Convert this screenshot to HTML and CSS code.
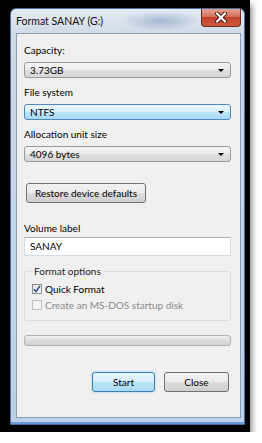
FILE: index.html
```html
<!DOCTYPE html>
<html lang="en">
<head>
  <meta charset="UTF-8">
  <title>Format SANAY (G:)</title>
  <link rel="stylesheet" href="styles.css">
</head>
<body>
  <div class="shot">
    <div class="window">
      <div class="titlebar">
        <span class="title">Format SANAY (G:)</span>
        <div class="close-btn">
          <svg width="14" height="11" viewBox="0 0 14 11">
            <path d="M3 1.5 L11 9.5 M11 1.5 L3 9.5" stroke="#4a1a14" stroke-width="4" stroke-linecap="round"/>
            <path d="M3 1.5 L11 9.5 M11 1.5 L3 9.5" stroke="#ffffff" stroke-width="2.2" stroke-linecap="round"/>
          </svg>
        </div>
      </div>

      <div class="content">
        <span class="lbl">Capacity:</span>
        <div class="combo"><span>3.73GB</span><i class="arrow"></i></div>

        <span class="lbl">File system</span>
        <div class="combo focused"><span>NTFS</span><i class="arrow"></i></div>

        <span class="lbl">Allocation unit size</span>
        <div class="combo"><span>4096 bytes</span><i class="arrow"></i></div>

        <div class="btn restore">Restore device defaults</div>

        <span class="lbl vol">Volume label</span>
        <div class="textbox">SANAY</div>

        <fieldset class="group">
          <legend>Format options</legend>
          <div class="check-row">
            <span class="checkbox checked">
              <svg width="8" height="8" viewBox="0 0 8 8"><path d="M1 4.2 L3 6.6 L7 0.8" fill="none" stroke="#1f3f88" stroke-width="1.4"/></svg>
            </span>
            <span>Quick Format</span>
          </div>
          <div class="check-row disabled">
            <span class="checkbox"></span>
            <span>Create an MS-DOS startup disk</span>
          </div>
        </fieldset>

        <div class="progress"></div>

        <div class="actions">
          <div class="btn default">Start</div>
          <div class="btn">Close</div>
        </div>
      </div>
    </div>
  </div>
</body>
</html>
```

FILE: styles.css
```css
body {
  margin: 0;
  background: #ffffff;
  font-family: Lato, "Open Sans", sans-serif;
  font-size: 10px;
  color: #000000;
}
.shot {
  width: 235px;
  height: 417px;
  padding: 8px 5px 7px 10px;
  background: #000000;
  box-shadow: 2px 4px 6px rgba(0, 0, 0, 0.45);
}
.window {
  box-sizing: border-box;
  height: 417px;
  display: flex;
  flex-direction: column;
  padding: 0 3px 6px 5px;
  border: 1px solid #4b6e9c;
  border-radius: 6px 6px 0 0;
  background:
    radial-gradient(ellipse 40px 10px at 150px 12px, rgba(120, 150, 190, 0.55), rgba(120, 150, 190, 0)),
    linear-gradient(to bottom, #e4eaf1 0, #ccd9e7 30px, #bcd0e8 100%);
  box-shadow: inset 0 -2px 0 #6a9ad8;
}
.titlebar {
  height: 24px;
  display: flex;
  justify-content: space-between;
  align-items: flex-start;
}
.title {
  margin: 6px 0 0 0;
  font-size: 10.5px;
  line-height: 13px;
  color: #111;
}
.close-btn {
  width: 40px;
  height: 18px;
  box-sizing: border-box;
  display: flex;
  align-items: center;
  justify-content: center;
  border: 1px solid #6b2c24;
  border-top: none;
  border-radius: 0 0 4px 4px;
  background: linear-gradient(to bottom, #e6a493 0, #d3735c 45%, #c2412b 50%, #cf5a3c 100%);
}
.content {
  flex: 1;
  padding: 10px 9px 0 7px;
  border: 1px solid #8a9db3;
  background: #f0f0f0;
}
.lbl {
  display: block;
  height: 13px;
  line-height: 13px;
}
.combo {
  box-sizing: border-box;
  height: 16px;
  margin: 5px 0 8px;
  padding: 0 6px 0 5px;
  display: flex;
  align-items: center;
  justify-content: space-between;
  border: 1px solid #9a9a9a;
  border-radius: 3px;
  background: linear-gradient(to bottom, #f4f4f4 0, #ececec 50%, #dfdfdf 51%, #d6d6d6 100%);
}
.combo.focused {
  border-color: #4d8bbf;
  background: linear-gradient(to bottom, #eaf6fd 0, #d9f0fc 50%, #bee6fd 51%, #a7d9f5 100%);
}
.arrow {
  width: 0;
  height: 0;
  border-left: 3px solid transparent;
  border-right: 3px solid transparent;
  border-top: 3px solid #000;
}
.btn {
  box-sizing: border-box;
  height: 20px;
  display: flex;
  align-items: center;
  justify-content: center;
  border: 1px solid #707070;
  border-radius: 3px;
  background: linear-gradient(to bottom, #f2f2f2 0, #ebebeb 50%, #dddddd 51%, #cfcfcf 100%);
}
.restore {
  width: 120px;
  margin: 21px 0 0 2px;
}
.lbl.vol {
  margin-top: 19px;
}
.textbox {
  box-sizing: border-box;
  height: 19px;
  margin-top: 2px;
  padding: 0 5px;
  line-height: 17px;
  border: 1px solid #d5dbe3;
  border-top-color: #abadb3;
  background: #ffffff;
}
.group {
  margin: 9px 0 0;
  padding: 0 7px 7px 7px;
  border: 1px solid #d5dfe5;
  border-radius: 3px;
}
.group legend {
  padding: 0 2px;
  line-height: 13px;
  color: #222;
}
.check-row {
  height: 16px;
  display: flex;
  align-items: center;
  gap: 3px;
}
.check-row:first-of-type {
  margin-top: 3px;
}
.check-row.disabled {
  color: #8a8a8a;
}
.checkbox {
  box-sizing: border-box;
  width: 10px;
  height: 10px;
  display: flex;
  align-items: center;
  justify-content: center;
  border: 1px solid #8f8f8f;
  background: linear-gradient(135deg, #dcdcdc, #fbfbfb);
}
.check-row.disabled .checkbox {
  border-color: #c0c0c0;
  background: #f4f4f4;
}
.progress {
  box-sizing: border-box;
  height: 11px;
  margin-top: 14px;
  border: 1px solid #b2b2b2;
  border-radius: 3px;
  background: linear-gradient(to bottom, #f0f0f0 0, #dddddd 50%, #d2d2d2 100%);
}
.actions {
  display: flex;
  justify-content: flex-end;
  gap: 9px;
  margin: 26px 2px 0 0;
}
.actions .btn {
  width: 65px;
}
.actions .btn.default {
  width: 63px;
  border-color: #3c7fb1;
  background: linear-gradient(to bottom, #e9f6fd 0, #d6eefb 50%, #bde4f7 51%, #a9dbf5 100%);
  box-shadow: 0 0 2px #5fc8f0;
}
```
